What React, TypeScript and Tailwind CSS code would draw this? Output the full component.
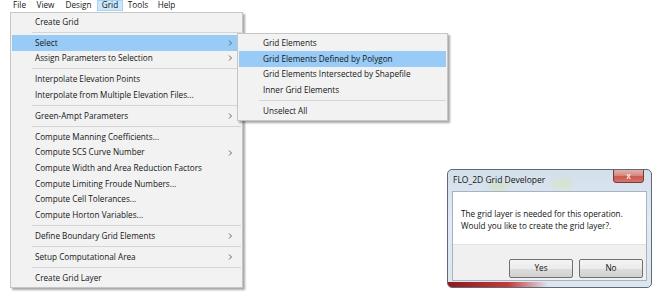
import React from "react";

type Item = { label: string; arrow?: boolean; hl?: boolean } | "sep";

const mainItems: Item[] = [
  { label: "Create Grid" },
  "sep",
  { label: "Select", arrow: true, hl: true },
  { label: "Assign Parameters to Selection", arrow: true },
  "sep",
  { label: "Interpolate Elevation Points" },
  { label: "Interpolate from Multiple Elevation Files..." },
  "sep",
  { label: "Green-Ampt Parameters", arrow: true },
  "sep",
  { label: "Compute Manning Coefficients..." },
  { label: "Compute SCS Curve Number", arrow: true },
  { label: "Compute Width and Area Reduction Factors" },
  { label: "Compute Limiting Froude Numbers..." },
  { label: "Compute Cell Tolerances..." },
  { label: "Compute Horton Variables..." },
  "sep",
  { label: "Define Boundary Grid Elements", arrow: true },
  "sep",
  { label: "Setup Computational Area", arrow: true },
  "sep",
  { label: "Create Grid Layer" },
];

const subItems: Item[] = [
  { label: "Grid Elements" },
  { label: "Grid Elements Defined by Polygon", hl: true },
  { label: "Grid Elements Intersected by Shapefile" },
  { label: "Inner Grid Elements" },
  "sep",
  { label: "Unselect All" },
];

function Chevron() {
  return (
    <svg width="5" height="7" viewBox="0 0 5 7" className="absolute right-[8px] top-1/2 -translate-y-1/2">
      <polyline points="1,1 3.5,3.5 1,6" fill="none" stroke="#666" strokeWidth="1" />
    </svg>
  );
}

function MenuList({ items, rowH, sepH, padL }: { items: Item[]; rowH: string; sepH: string; padL: string }) {
  return (
    <>
      {items.map((it, i) =>
        it === "sep" ? (
          <div key={i} className={`${sepH} flex items-center`}>
            <div className="h-px flex-1 ml-[20px] bg-[#d5d5d5]" />
          </div>
        ) : (
          <div
            key={i}
            className={`${rowH} ${padL} relative flex items-center whitespace-nowrap ${it.hl ? "bg-[#98cbf6]" : ""}`}
          >
            <span>{it.label}</span>
            {it.arrow && <Chevron />}
          </div>
        )
      )}
    </>
  );
}

export default function App() {
  const font = { fontFamily: '"Open Sans", "Noto Sans", sans-serif' };
  return (
    <div className="relative w-[662px] h-[297px] bg-white overflow-hidden text-[8.2px] text-[#161616]" style={font}>
      {/* Menu bar */}
      <div className="flex h-[11px] pl-[8px] items-center leading-none">
        <div className="w-[23px] text-center">File</div>
        <div className="w-[29px] text-center">View</div>
        <div className="w-[37px] text-center">Design</div>
        <div className="w-[26px] h-[11px] flex items-center justify-center bg-[#cce6fb] border border-[#a6d2f6]">Grid</div>
        <div className="w-[30px] text-center">Tools</div>
        <div className="w-[27px] text-center">Help</div>
      </div>

      {/* Main Grid menu */}
      <div className="absolute left-[10px] top-[12px] w-[233px] h-[276px] bg-[#f2f2f2] border border-[#c6c6c6] shadow-[2px_2px_2px_rgba(0,0,0,0.35)] pt-[1px] px-px">
        <MenuList items={mainItems} rowH="h-[15.6px]" sepH="h-[5.4px]" padL="pl-[23px]" />
      </div>

      {/* Select submenu */}
      <div className="absolute left-[237px] top-[33px] w-[211px] h-[88px] bg-[#f2f2f2] border border-[#c6c6c6] shadow-[2px_2px_2px_rgba(0,0,0,0.35)] pt-[1.5px] px-px">
        <MenuList items={subItems} rowH="h-[15.5px]" sepH="h-[5.5px]" padL="pl-[24px]" />
      </div>

      {/* Dialog */}
      <div className="absolute left-[447px] top-[169px] w-[205px] h-[119px] rounded-[5px] border border-[#5e6a78] overflow-hidden bg-[linear-gradient(180deg,#d3dfec_0%,#e2eaf3_40%,#dde6ef_100%)] flex flex-col">
        {/* glass tint specks */}
        <div className="absolute left-[40px] top-[12px] w-[20px] h-[10px] rounded-full bg-[#cfe0b0] opacity-60 blur-[3px]" />
        <div className="absolute left-[105px] top-[10px] w-[18px] h-[8px] rounded-full bg-[#d8e4a8] opacity-60 blur-[3px]" />
        <div className="absolute left-0 bottom-0 w-[100px] h-[5px] bg-[linear-gradient(90deg,#8a1a1a,#c53a3a_60%,rgba(220,120,120,0))]" />
        {/* title bar */}
        <div className="relative h-[21px] flex items-center pl-[5px] text-[#141414] text-[8.5px]">
          <span>FLO_2D Grid Developer</span>
          <div className="absolute right-[7px] top-[-1px] w-[31px] h-[14px] rounded-b-[3px] border border-[#7c3a35] bg-[linear-gradient(180deg,#e2b0aa_0%,#d68a81_45%,#c9574e_55%,#d5766b_100%)] flex items-center justify-center">
            <span className="text-white text-[8px] leading-none font-bold opacity-80">x</span>
          </div>
        </div>
        {/* body */}
        <div className="relative mx-[4px] border border-[#a5b3c3] flex flex-col h-[90px]">
          <div className="bg-white h-[52px] flex flex-col justify-center pl-[8px] pt-[3px] leading-[12px] text-[#111]">
            <div>The grid layer is needed for this operation.</div>
            <div>Would you like to create the grid layer?.</div>
          </div>
          <div className="flex-1 bg-[#f0f0f0] border-t border-[#e2e2e2] flex justify-end items-start pt-[14px] pr-[3px] gap-[6px]">
            <button className="w-[64px] h-[19px] rounded-[2px] border border-[#707070] bg-[linear-gradient(180deg,#f4f4f4_0%,#ebebeb_50%,#dddddd_51%,#d1d1d1_100%)] text-[8.2px] text-[#111]">
              Yes
            </button>
            <button className="w-[64px] h-[19px] rounded-[2px] border border-[#707070] bg-[linear-gradient(180deg,#f4f4f4_0%,#ebebeb_50%,#dddddd_51%,#d1d1d1_100%)] text-[8.2px] text-[#111]">
              No
            </button>
          </div>
        </div>
      </div>
    </div>
  );
}
